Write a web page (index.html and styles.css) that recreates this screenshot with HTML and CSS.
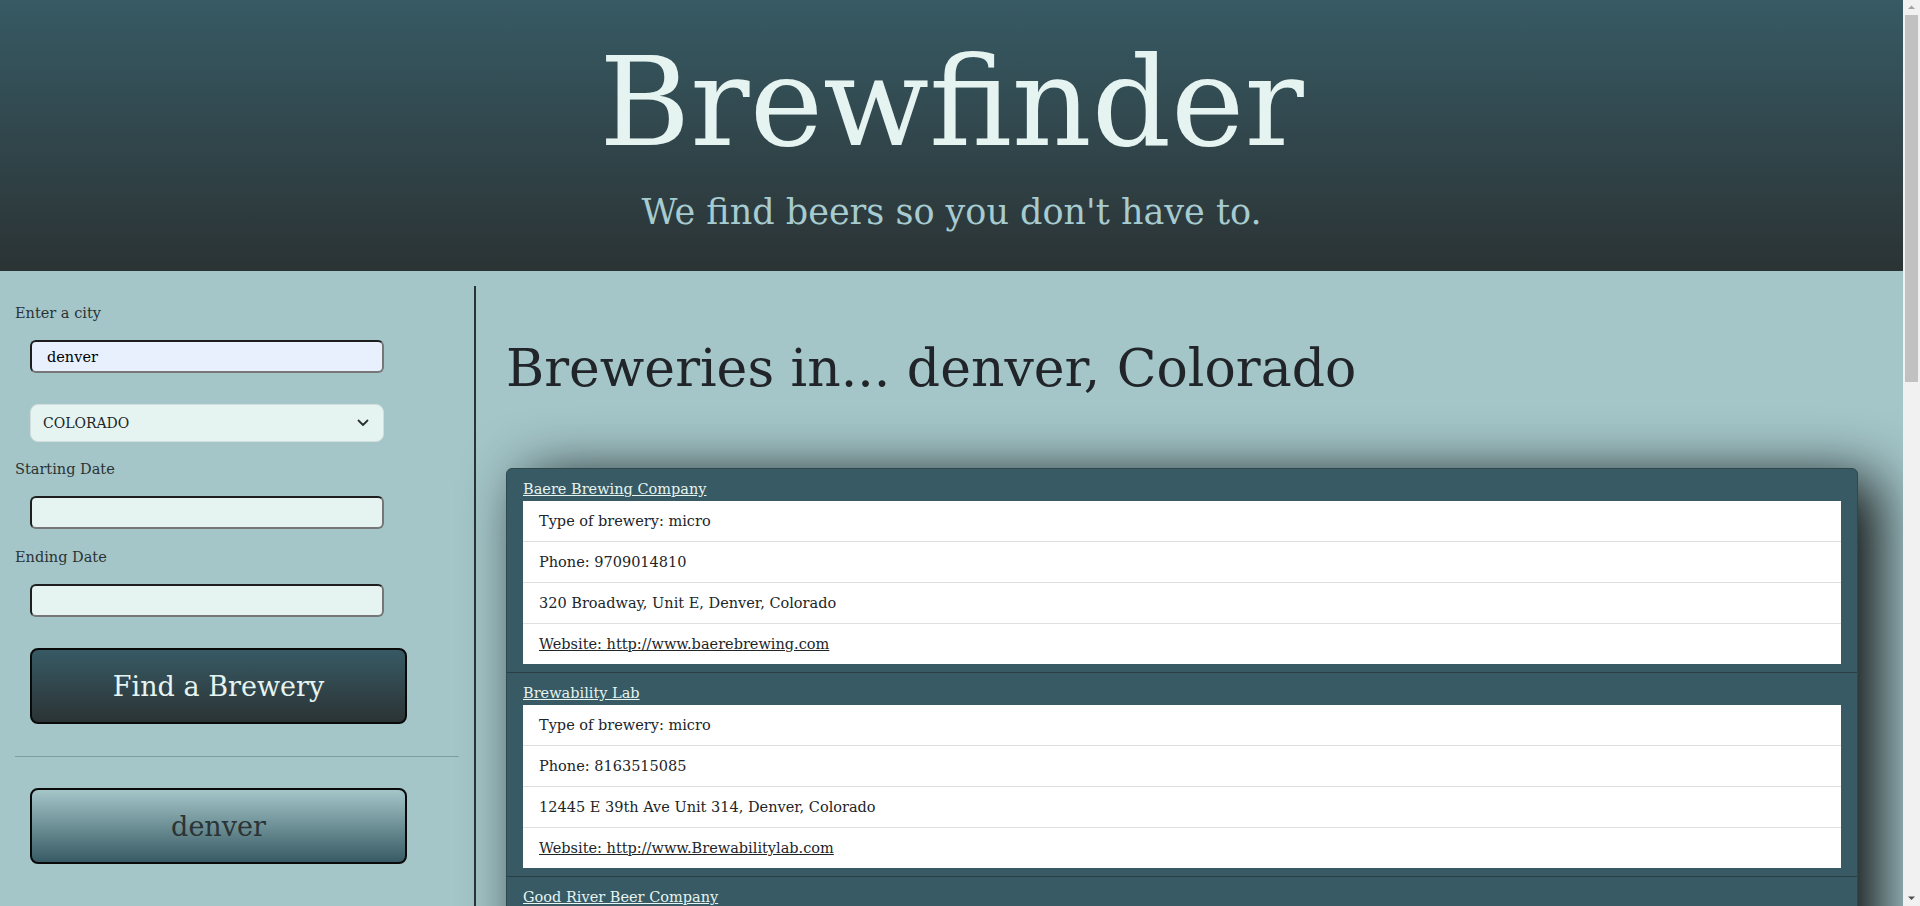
FILE: index.html
```html
<!DOCTYPE html>
<html lang="en">
<head>
<meta charset="utf-8">
<title>Brewfinder</title>
<link rel="stylesheet" href="styles.css">
</head>
<body>
<header class="hero">
  <h1 class="hero-title">Brewfinder</h1>
  <p class="hero-sub">We find beers so you don't have to.</p>
</header>
<div class="layout">
  <aside class="sidebar">
    <label class="field-label" for="city">Enter a city</label>
    <input class="field field-city" id="city" type="text" value="denver">
    <div class="select-wrap">
      <select class="state-select" aria-label="State">
        <option>COLORADO</option>
      </select>
      <svg class="chev" width="12" height="8" viewBox="0 0 12 8"><path d="M1.5 1.5 6 6l4.5-4.5" fill="none" stroke="#2b3334" stroke-width="1.8" stroke-linecap="round" stroke-linejoin="round"/></svg>
    </div>
    <label class="field-label mt15" for="start">Starting Date</label>
    <input class="field" id="start" type="text">
    <label class="field-label mt16" for="end">Ending Date</label>
    <input class="field" id="end" type="text">
    <button class="btn btn-find" type="button">Find a Brewery</button>
    <hr class="divider">
    <button class="btn btn-history" type="button">denver</button>
  </aside>
  <main class="results">
    <h1 class="results-title">Breweries in... denver, Colorado</h1>
    <section class="card">
      <article class="brewery">
        <a class="brewery-name" href="#">Baere Brewing Company</a>
        <ul class="brewery-info">
          <li>Type of brewery: micro</li>
          <li>Phone: 9709014810</li>
          <li>320 Broadway, Unit E, Denver, Colorado</li>
          <li><a href="#">Website: http://www.baerebrewing.com</a></li>
        </ul>
      </article>
      <article class="brewery">
        <a class="brewery-name" href="#">Brewability Lab</a>
        <ul class="brewery-info">
          <li>Type of brewery: micro</li>
          <li>Phone: 8163515085</li>
          <li>12445 E 39th Ave Unit 314, Denver, Colorado</li>
          <li><a href="#">Website: http://www.Brewabilitylab.com</a></li>
        </ul>
      </article>
      <article class="brewery">
        <a class="brewery-name" href="#">Good River Beer Company</a>
        <ul class="brewery-info">
          <li>Type of brewery: micro</li>
          <li>Phone: 7204409040</li>
          <li>5225 Brighton Blvd, Denver, Colorado</li>
          <li><a href="#">Website: http://www.goodriverbeer.com</a></li>
        </ul>
      </article>
      <article class="brewery">
        <a class="brewery-name" href="#">Jagged Mountain Craft Brewery</a>
        <ul class="brewery-info">
          <li>Type of brewery: micro</li>
          <li>Phone: 7206894677</li>
          <li>1139 20th St, Denver, Colorado</li>
          <li><a href="#">Website: http://www.jaggedmountainbrewery.com</a></li>
        </ul>
      </article>
      <article class="brewery">
        <a class="brewery-name" href="#">Little Machine Beer</a>
        <ul class="brewery-info">
          <li>Type of brewery: micro</li>
          <li>Phone: 3034767400</li>
          <li>2924 W 20th Ave, Denver, Colorado</li>
          <li><a href="#">Website: http://www.littlemachinebeer.com</a></li>
        </ul>
      </article>
      <article class="brewery">
        <a class="brewery-name" href="#">Ratio Beerworks</a>
        <ul class="brewery-info">
          <li>Type of brewery: micro</li>
          <li>Phone: 3039970029</li>
          <li>2920 Larimer St, Denver, Colorado</li>
          <li><a href="#">Website: http://www.ratiobeerworks.com</a></li>
        </ul>
      </article>
      <article class="brewery">
        <a class="brewery-name" href="#">Spangalang Brewery</a>
        <ul class="brewery-info">
          <li>Type of brewery: micro</li>
          <li>Phone: 3032973437</li>
          <li>2736 Welton St, Denver, Colorado</li>
          <li><a href="#">Website: http://www.spangalangbrewery.com</a></li>
        </ul>
      </article>
      <article class="brewery">
        <a class="brewery-name" href="#">TRVE Brewing Co</a>
        <ul class="brewery-info">
          <li>Type of brewery: micro</li>
          <li>Phone: 3033511021</li>
          <li>227 Broadway Ste 101, Denver, Colorado</li>
          <li><a href="#">Website: http://www.trvebrewing.com</a></li>
        </ul>
      </article>
    </section>
  </main>
</div>
<div class="scrollbar" aria-hidden="true">
  <svg class="scroll-arrow" width="17" height="15" viewBox="0 0 17 15"><path d="M5 9h7L8.5 5.5z" fill="#a3a3a3"/></svg>
  <div class="scroll-thumb"></div>
  <svg class="scroll-arrow scroll-arrow-down" width="17" height="15" viewBox="0 0 17 15"><path d="M5 5.5h7L8.5 9z" fill="#505050"/></svg>
</div>
</body>
</html>
```
FILE: styles.css
```css
* { box-sizing: border-box; }
html, body { margin: 0; }
body {
  background: #a4c6c9;
  font-family: "DejaVu Serif", serif;
  color: #212529;
  padding-right: 17px;
}

/* header */
.hero {
  height: 271px;
  background: linear-gradient(#375a64, #2b3334);
  display: flex;
  flex-direction: column;
  align-items: center;
  padding-top: 39px;
}
.hero-title {
  margin: 0;
  font-size: 124px;
  line-height: 126px;
  font-weight: 400;
  color: #e6f4f1;
}
.hero-sub {
  margin: 30px 0 0;
  font-size: 35px;
  line-height: 35px;
  color: #a6cbd0;
}

/* layout */
.layout {
  display: flex;
  padding-top: 15px;
}
.sidebar {
  flex: none;
  width: 476px;
  border-right: 2px solid #2b3334;
  padding: 15px 15px 0;
  display: flex;
  flex-direction: column;
  align-items: flex-start;
}
.field-label {
  display: block;
  font-size: 14.5px;
  line-height: 24px;
  color: #2b3334;
}
.mt15 { margin-top: 15px; }
.mt16 { margin-top: 16px; }
.field {
  margin: 15px 0 0 15px;
  width: 354px;
  height: 33px;
  border: 2px solid;
  border-color: #1e1e1e #767676 #767676 #1e1e1e;
  border-radius: 6px;
  background: #e6f4f1;
  padding: 0 15px;
  font-family: "DejaVu Serif", serif;
  font-size: 14.5px;
  color: #000;
}
.field-city { background: #e8f0fe; }
.select-wrap {
  position: relative;
  margin: 31px 0 0 15px;
  width: 354px;
  height: 38px;
}
.state-select {
  appearance: none;
  -webkit-appearance: none;
  width: 100%;
  height: 100%;
  border: 1px solid #d2dfde;
  border-radius: 8px;
  background: #e6f4f1;
  padding: 0 12px;
  font-family: "DejaVu Serif", serif;
  font-size: 14px;
  color: #212529;
}
.chev {
  position: absolute;
  right: 15px;
  top: 15px;
  pointer-events: none;
}
.btn {
  margin: 31px 0 0 15px;
  width: 377px;
  height: 76px;
  border: 2px solid #0a0a0a;
  border-radius: 8px;
  font-family: "DejaVu Serif", serif;
  font-size: 27px;
  display: flex;
  align-items: center;
  justify-content: center;
  padding: 0;
}
.btn-find {
  background: linear-gradient(#375a64, #2b3334);
  color: #e6f4f1;
}
.btn-history {
  background: linear-gradient(#a4c6c9, #375a64);
  color: #2b3334;
}
.divider {
  align-self: stretch;
  margin: 32px 0 0;
  border: 0;
  border-top: 1px solid #7d9fa3;
  height: 0;
}

/* results */
.results {
  flex: 1;
  min-width: 0;
  padding: 0 45px 0 30px;
}
.results-title {
  margin: 51px 0 69px;
  font-size: 52px;
  line-height: 62px;
  font-weight: 400;
  color: #212529;
}
.card {
  background: #375a64;
  border: 1px solid #2e4850;
  border-radius: 6px;
  box-shadow: 20px 10px 60px rgba(0, 0, 0, 0.95);
  margin-bottom: 50px;
}
.brewery {
  padding: 0 16px 8px;
  border-bottom: 1px solid #2a3f45;
}
.brewery:last-child { border-bottom: 0; }
.brewery-name {
  display: block;
  width: max-content;
  padding-top: 8px;
  font-size: 14.5px;
  line-height: 24px;
  color: #e6f4f1;
}
.brewery-info {
  margin: 0;
  padding: 0;
  list-style: none;
  background: #fff;
}
.brewery-info li {
  padding: 8px 16px;
  font-size: 14.5px;
  line-height: 24px;
  color: #212529;
  border-bottom: 1px solid #dfdfdf;
}
.brewery-info li:last-child { border-bottom: 0; }
.brewery-info a { color: #212529; }

/* emulated browser scrollbar */
.scrollbar {
  position: fixed;
  top: 0;
  right: 0;
  width: 17px;
  height: 100vh;
  background: #f1f1f1;
  display: flex;
  flex-direction: column;
  align-items: center;
}
.scroll-arrow { display: block; flex: none; }
.scroll-thumb {
  width: 13px;
  height: 367px;
  background: #c1c1c1;
}
.scroll-arrow-down { margin-top: auto; }
```
